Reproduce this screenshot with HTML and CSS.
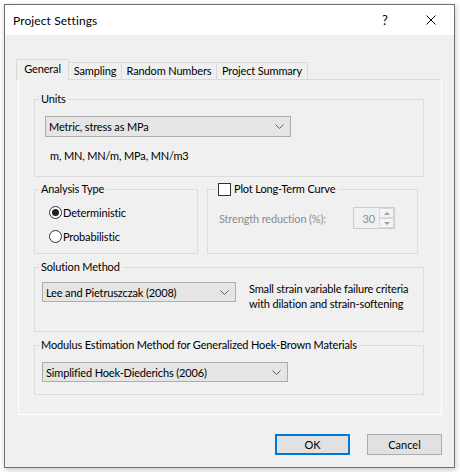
FILE: index.html
```html
<!DOCTYPE html>
<html lang="en">
<head>
    <meta charset="UTF-8">
    <title>Project Settings</title>
    <link rel="stylesheet" href="styles.css">
</head>
<body>
    <div class="dialog">
        <div class="titlebar">
            <span class="title">Project Settings</span>
            <span class="caption-btn help">?</span>
            <span class="caption-btn close">
                <svg width="10" height="10" viewBox="0 0 10 10"><path d="M0.5 0.5L9.5 9.5M9.5 0.5L0.5 9.5" stroke="#000" stroke-width="1" fill="none"/></svg>
            </span>
        </div>

        <div class="client">
            <div class="tabs">
                <div class="tab active tab-general">General</div>
                <div class="tab tab-sampling">Sampling</div>
                <div class="tab tab-random">Random Numbers</div>
                <div class="tab tab-summary">Project Summary</div>
            </div>

            <div class="panel">
                <fieldset class="group group-units">
                    <legend>Units</legend>
                    <div class="group-body">
                        <div class="combo combo-units">
                            <span>Metric, stress as MPa</span>
                            <svg class="chevron" width="9" height="5" viewBox="0 0 9 5"><path d="M0.5 0.5L4.5 4.5L8.5 0.5" stroke="#606060" fill="none"/></svg>
                        </div>
                        <div class="units-list">m, MN, MN/m, MPa, MN/m3</div>
                    </div>
                </fieldset>

                <div class="row">
                    <fieldset class="group group-analysis">
                        <legend>Analysis Type</legend>
                        <div class="group-body">
                            <label class="radio"><span class="dot checked"></span>Deterministic</label>
                            <label class="radio"><span class="dot"></span>Probabilistic</label>
                        </div>
                    </fieldset>

                    <fieldset class="group group-longterm">
                        <legend><span class="check"></span>Plot Long-Term Curve</legend>
                        <div class="group-body strength">
                            <span class="disabled">Strength reduction (%):</span>
                            <div class="spinner">
                                <span class="spin-value">30</span>
                                <div class="spin-buttons">
                                    <span class="spin-up"></span>
                                    <span class="spin-down"></span>
                                </div>
                            </div>
                        </div>
                    </fieldset>
                </div>

                <fieldset class="group group-solution">
                    <legend>Solution Method</legend>
                    <div class="group-body solution-row">
                        <div class="combo combo-solution">
                            <span>Lee and Pietruszczak (2008)</span>
                            <svg class="chevron" width="9" height="5" viewBox="0 0 9 5"><path d="M0.5 0.5L4.5 4.5L8.5 0.5" stroke="#606060" fill="none"/></svg>
                        </div>
                        <div class="solution-note">Small strain variable failure criteria<br>with dilation and strain-softening</div>
                    </div>
                </fieldset>

                <fieldset class="group group-modulus">
                    <legend>Modulus Estimation Method for Generalized Hoek-Brown Materials</legend>
                    <div class="group-body">
                        <div class="combo combo-modulus">
                            <span>Simplified Hoek-Diederichs (2006)</span>
                            <svg class="chevron" width="9" height="5" viewBox="0 0 9 5"><path d="M0.5 0.5L4.5 4.5L8.5 0.5" stroke="#606060" fill="none"/></svg>
                        </div>
                    </div>
                </fieldset>
            </div>

            <div class="buttons">
                <button class="btn default">OK</button>
                <button class="btn">Cancel</button>
            </div>
        </div>
    </div>
</body>
</html>
```

FILE: styles.css
```css
body {
    margin: 0;
    background: #fff;
    font-family: Lato, sans-serif;
    font-size: 11px;
    letter-spacing: -0.15px;
    color: #000;
}
.dialog {
    width: 451px;
    height: 464px;
    margin: 4px;
    box-sizing: border-box;
    border: 1px solid #6f6f6f;
    background: #f0f0f0;
    box-shadow: 1px 2px 6px rgba(0, 0, 0, 0.22);
    display: flex;
    flex-direction: column;
}

/* caption */
.titlebar {
    height: 30px;
    background: #fff;
    display: flex;
    align-items: center;
    padding-left: 8px;
    font-size: 12px;
    letter-spacing: 0.1px;
}
.title {
    flex: 1;
}
.caption-btn {
    width: 46px;
    height: 30px;
    display: flex;
    align-items: center;
    justify-content: center;
}
.help {
    font-size: 13px;
}

/* tabs + page */
.client {
    flex: 1;
    padding: 24px 0 0 11px;
}
.tabs {
    display: flex;
    align-items: flex-end;
    height: 20px;
    position: relative;
    z-index: 1;
}
.tab {
    box-sizing: border-box;
    height: 17px;
    line-height: 16px;
    text-align: center;
    border: 1px solid #d9d9d9;
    border-left: none;
    border-bottom: none;
    white-space: nowrap;
}
.tab.active {
    height: 21px;
    line-height: 18px;
    border-left: 1px solid #d9d9d9;
    background: #f0f0f0;
    margin-bottom: -1px;
}
.tab-general { width: 53px; }
.tab-sampling { width: 53px; }
.tab-random { width: 95px; }
.tab-summary { width: 91px; }

.panel {
    margin-left: 2px;
    width: 424px;
    height: 336px;
    box-sizing: border-box;
    border: 1px solid #fff;
    border-top-color: #dadada;
    padding: 11px 17px 0 15px;
}

/* group boxes: the legend sits on the top border */
.group {
    margin: 0;
    padding: 0;
    border: 1px solid #dcdcdc;
    min-width: 0;
}
.group legend {
    padding: 0 2px;
    margin-left: 4px;
    line-height: 16px;
}
.group-units .group-body {
    padding: 9px 10px 12px 10px;
}
.combo {
    box-sizing: border-box;
    height: 21px;
    border: 1px solid #adadad;
    background: #e5e5e5;
    display: flex;
    align-items: center;
    justify-content: space-between;
    padding: 0 6px 0 3px;
}
.combo-units { width: 246px; }
.units-list {
    margin-top: 11px;
    padding-left: 5px;
    line-height: 16px;
}

.row {
    display: flex;
    gap: 9px;
    margin-top: 4px;
    align-items: flex-start;
}
.group-analysis {
    width: 164px;
    box-sizing: border-box;
}
.group-analysis .group-body {
    padding: 7px 8px 9px 14px;
}
.radio {
    display: flex;
    align-items: center;
    height: 16px;
    gap: 1px;
}
.radio + .radio {
    margin-top: 8px;
}
.dot {
    width: 13px;
    height: 13px;
    box-sizing: border-box;
    border: 1px solid #333;
    border-radius: 50%;
    background: #fff;
    display: flex;
    align-items: center;
    justify-content: center;
}
.dot.checked::after {
    content: "";
    width: 7px;
    height: 7px;
    border-radius: 50%;
    background: #222;
}

.group-longterm {
    width: 211px;
    box-sizing: border-box;
}
.group-longterm legend {
    display: flex;
    align-items: center;
    gap: 3px;
    padding: 0 3px 0 0;
    margin-left: 10px;
}
.check {
    width: 13px;
    height: 13px;
    box-sizing: border-box;
    border: 1px solid #333;
    background: #fff;
}
.strength {
    display: flex;
    align-items: center;
    justify-content: space-between;
    padding: 10px 10px 24px 11px;
}
.disabled {
    color: #8d8d8d;
}
.spinner {
    width: 42px;
    height: 22px;
    box-sizing: border-box;
    border: 1px solid #cccccc;
    display: flex;
    align-items: center;
    justify-content: flex-end;
    margin-right: 12px;
}
.spin-value {
    color: #8d8d8d;
    padding-right: 4px;
}
.spin-buttons {
    width: 15px;
    height: 20px;
    display: flex;
    flex-direction: column;
}
.spin-up, .spin-down {
    flex: 1;
    box-sizing: border-box;
    border: 1px solid #d9d9d9;
    background: #f4f4f4;
    display: flex;
    align-items: center;
    justify-content: center;
}
.spin-up::after {
    content: "";
    border-left: 3px solid transparent;
    border-right: 3px solid transparent;
    border-bottom: 3px solid #a0a0a0;
}
.spin-down::after {
    content: "";
    border-left: 3px solid transparent;
    border-right: 3px solid transparent;
    border-top: 3px solid #a0a0a0;
}

.group-solution {
    margin-top: 5px;
}
.solution-row {
    display: flex;
    align-items: flex-start;
    gap: 13px;
    padding: 6px 10px 20px 7px;
}
.combo-solution {
    width: 194px;
    height: 20px;
    margin-top: 1px;
}
.solution-note {
    line-height: 15px;
    white-space: nowrap;
}

.group-modulus {
    margin-top: 5px;
}
.group-modulus .group-body {
    padding: 9px 10px 12px 7px;
}
.combo-modulus {
    width: 246px;
    height: 20px;
}

/* dialog buttons */
.buttons {
    display: flex;
    justify-content: flex-end;
    gap: 17px;
    margin-top: 19px;
    padding-right: 12px;
}
.btn {
    width: 75px;
    height: 21px;
    box-sizing: border-box;
    border: 1px solid #adadad;
    background: #e1e1e1;
    font: inherit;
    padding: 0;
}
.btn.default {
    border: 2px solid #0078d7;
}
```
